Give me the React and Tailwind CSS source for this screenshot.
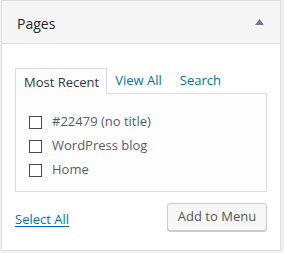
import React from "react";

const pages = ["#22479 (no title)", "WordPress blog", "Home"];

const App = () => {
  return (
    <div
      className="w-[284px] h-[253px] bg-[#f1f1f1] pl-px text-[#32373c]"
      style={{ fontFamily: '"Open Sans", "Noto Sans", sans-serif' }}
    >
      <div className="w-[280px] h-[251px] bg-white border border-[#dddddd] flex flex-col">
        {/* Section title */}
        <div className="h-[43px] bg-[#f5f5f5] border-b border-[#dddddd] flex items-center justify-between pl-[15px] pr-[16px]">
          <h3 className="text-[14px] text-[#23282d] pt-[2px]">Pages</h3>
          <svg width="9" height="6" viewBox="0 0 9 6" className="mb-px">
            <path d="M4.5 0 L9 6 L0 6 Z" fill="#787c82" />
          </svg>
        </div>

        <div className="px-[13px] pt-[24px]">
          {/* Tabs */}
          <div className="flex items-end text-[13px] h-[25px]">
            <div className="h-[26px] pl-[8px] pr-[7px] pt-[3px] border border-[#dddddd] border-b-0 bg-[#fdfdfd] flex items-center text-[#32373c] relative top-px">
              Most Recent
            </div>
            <a className="pl-[8px] pr-[9px] pt-[3px] text-[#0073aa] leading-[25px]">View All</a>
            <a className="px-[9px] pt-[3px] text-[#0073aa] leading-[25px]">Search</a>
          </div>

          {/* Tab panel */}
          <div className="h-[99px] border border-[#dddddd] bg-[#fdfdfd] pt-[20px] pl-[13px]">
            <ul className="flex flex-col gap-[8px]">
              {pages.map((p) => (
                <li key={p} className="flex items-center h-[16px] text-[13px] text-[#555d66]">
                  <span className="w-[13px] h-[13px] border border-[#4a4a4a] bg-white" />
                  <span className="ml-[10px]">{p}</span>
                </li>
              ))}
            </ul>
          </div>

          {/* Footer actions */}
          <div className="flex items-center justify-between mt-[11px]">
            <a className="text-[13px] text-[#0073aa] underline underline-offset-2 mt-[6px]">
              Select All
            </a>
            <button className="h-[28px] w-[100px] whitespace-nowrap text-[13px] text-[#555555] bg-[#f7f7f7] border border-[#cccccc] rounded-[3px] shadow-[0_1px_0_#cccccc]">
              Add to Menu
            </button>
          </div>
        </div>
      </div>
    </div>
  );
};

export default App;
